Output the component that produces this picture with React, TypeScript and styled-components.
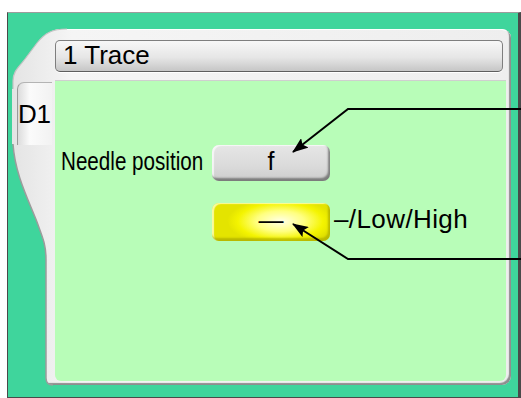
import React from 'react';
import styled, { createGlobalStyle } from 'styled-components';

const GlobalStyle = createGlobalStyle`
  html, body {
    margin: 0;
    padding: 0;
    background: #ffffff;
  }
  body {
    font-family: 'Liberation Sans', Arial, sans-serif;
    color: #000000;
  }
`;

const Stage = styled.div`
  position: relative;
  width: 521px;
  height: 398px;
  box-sizing: border-box;
  padding: 12px 0 0 7px;
  overflow: hidden;
`;

const Screen = styled.div`
  box-sizing: border-box;
  width: 514px;
  height: 386px;
  display: flex;
  flex-direction: column;
  background: #3fd59c;
  border: 1px solid #4a4a4a;
  border-top-color: #9c9c9c;
  border-right-width: 3px;
  padding: 16px 7px 12px 4px;
`;

const Bezel = styled.div`
  position: relative;
  flex: 1;
  display: flex;
  background: linear-gradient(90deg, #e4e4e4 0%, #f5f5f5 12%, #eeeeee 100%);
  border-radius: 0 9px 9px 0;
  box-shadow: inset -2px -2px 1px #8e8e8e, inset 0 1px 0 #ffffff;
`;

// green corners cut out of the bezel on the left side
const Cutout = styled.svg<{ $top: number; $h: number }>`
  position: absolute;
  left: 0;
  top: ${(p) => p.$top}px;
  width: 60px;
  height: ${(p) => p.$h}px;
  overflow: visible;
`;

const TabColumn = styled.div`
  position: relative;
  width: 40px;
  flex: none;
`;

const Tab = styled.div`
  box-sizing: border-box;
  margin: 53px 0 0 5px;
  width: 35px;
  height: 63px;
  border-radius: 7px 0 0 0;
  border-left: 1px solid #9a9a9a;
  border-top: 1px solid #b4b4b4;
  background: linear-gradient(90deg, #dcdcdc 0%, #fbfbfb 35%, #f2f2f2 100%);
  font-size: 26px;
  line-height: 25px;
  padding-top: 19px;
  letter-spacing: -0.4px;
`;

const Panel = styled.div`
  position: relative;
  flex: 1;
  display: flex;
  flex-direction: column;
  padding: 11px 5px 4px 3px;
`;

const TitleBar = styled.div`
  box-sizing: border-box;
  height: 32px;
  margin-right: 3px;
  border: 1px solid #7e7e7e;
  border-bottom-color: #5e5e5e;
  border-radius: 5px;
  background: linear-gradient(180deg, #f7f7f7 0%, #e6e6e6 55%, #c6c6c6 100%);
  box-shadow: 0 1px 0 #ffffff;
  font-size: 26px;
  line-height: 28px;
  padding: 0 0 0 7px;
`;

const Content = styled.div`
  flex: 1;
  margin-top: 8px;
  background: #b8fdb8;
  border-top: 1px solid #cfcfcf;
  border-radius: 0 0 6px 6px;
`;

const Form = styled.div`
  display: grid;
  grid-template-columns: 151px 118px auto;
  grid-template-rows: 36px 38px;
  row-gap: 22px;
  align-items: center;
  padding: 64px 0 0 6px;
`;

const Label = styled.div<{ $col: number; $row: number }>`
  grid-column: ${(p) => p.$col};
  grid-row: ${(p) => p.$row};
  font-size: ${(p) => (p.$col === 3 ? 26 : 25)}px;
  line-height: normal;
  white-space: nowrap;
  letter-spacing: ${(p) => (p.$col === 3 ? '0.4px' : '0')};
  margin: ${(p) => (p.$col === 3 ? '0 0 6px 4px' : '0 0 4px 0')};
`;

// the screen uses a narrow face for this caption
const Narrow = styled.span`
  display: inline-block;
  transform: scaleX(0.825);
  transform-origin: left center;
`;

const KeyButton = styled.div<{ $tone: 'grey' | 'yellow'; $row: number }>`
  grid-column: 2;
  grid-row: ${(p) => p.$row};
  height: 100%;
  box-sizing: border-box;
  display: flex;
  align-items: center;
  justify-content: center;
  border-radius: 7px;
  font-size: 25px;
  padding-bottom: 3px;
  background: ${(p) =>
    p.$tone === 'yellow'
      ? 'radial-gradient(ellipse 45% 60% at 58% 48%, #ffffe8 0%, #ffff80 45%, #f4f400 80%, #e4e400 100%)'
      : 'linear-gradient(180deg, #e6e6e6 0%, #dadada 60%, #cdcdcd 100%)'};
  box-shadow: ${(p) =>
    p.$tone === 'yellow'
      ? 'inset -2px -3px 2px rgba(150, 150, 0, 0.55), inset 2px 1px 1px rgba(255, 255, 200, 0.8)'
      : 'inset -2px -3px 2px rgba(70, 70, 70, 0.6), inset 2px 1px 1px rgba(255, 255, 255, 0.7)'};
`;

const Callouts = styled.svg`
  position: absolute;
  left: 0;
  top: 0;
  width: 521px;
  height: 398px;
  pointer-events: none;
`;

const App: React.FC = () => {
  return (
    <>
      <GlobalStyle />
      <Stage>
        <Screen>
          <Bezel>
            <Cutout $top={0} $h={60} viewBox="0 0 60 60">
              <path
                d="M-1 -1 H55 C40 0 33 4 25 14 L13 30 C7 38 1 42 1 52 V60 H-1 Z"
                fill="#3fd59c"
              />
              <path
                d="M55 0 C40 0 33 4 25 14 L13 30 C7 38 1 42 1 52 V60"
                fill="none"
                stroke="#c4c4c4"
                strokeWidth="1.2"
              />
            </Cutout>
            <Cutout $top={115} $h={242} viewBox="0 0 60 242">
              <path
                d="M-1 0 H1 C3 30 16 55 25 78 C30 92 34 100 34 115 V234 Q34 241 41 241 V243 H-1 Z"
                fill="#3fd59c"
              />
              <path
                d="M1 0 C3 30 16 55 25 78 C30 92 34 100 34 115 V234 Q34 241 41 241"
                fill="none"
                stroke="#9c9c9c"
                strokeWidth="1.5"
              />
            </Cutout>
            <TabColumn>
              <Tab>D1</Tab>
            </TabColumn>
            <Panel>
              <TitleBar>1 Trace</TitleBar>
              <Content>
                <Form>
                  <Label $col={1} $row={1}>
                    <Narrow>Needle position</Narrow>
                  </Label>
                  <KeyButton $tone="grey" $row={1}>
                    f
                  </KeyButton>
                  <KeyButton $tone="yellow" $row={2}>
                    —
                  </KeyButton>
                  <Label $col={3} $row={2}>
                    –/Low/High
                  </Label>
                </Form>
              </Content>
            </Panel>
          </Bezel>
        </Screen>
        <Callouts viewBox="0 0 521 398">
          <defs>
            <marker
              id="tip"
              viewBox="0 0 16 12"
              refX="15"
              refY="6"
              markerWidth="16"
              markerHeight="12"
              markerUnits="userSpaceOnUse"
              orient="auto"
            >
              <path d="M0 0 L16 6 L0 12 L3 6 Z" fill="#000000" />
            </marker>
          </defs>
          <polyline
            points="521,109 348,109 293,152"
            fill="none"
            stroke="#000000"
            strokeWidth="2"
            markerEnd="url(#tip)"
          />
          <polyline
            points="521,259 348,259 293,224"
            fill="none"
            stroke="#000000"
            strokeWidth="2"
            markerEnd="url(#tip)"
          />
        </Callouts>
      </Stage>
    </>
  );
};

export default App;
